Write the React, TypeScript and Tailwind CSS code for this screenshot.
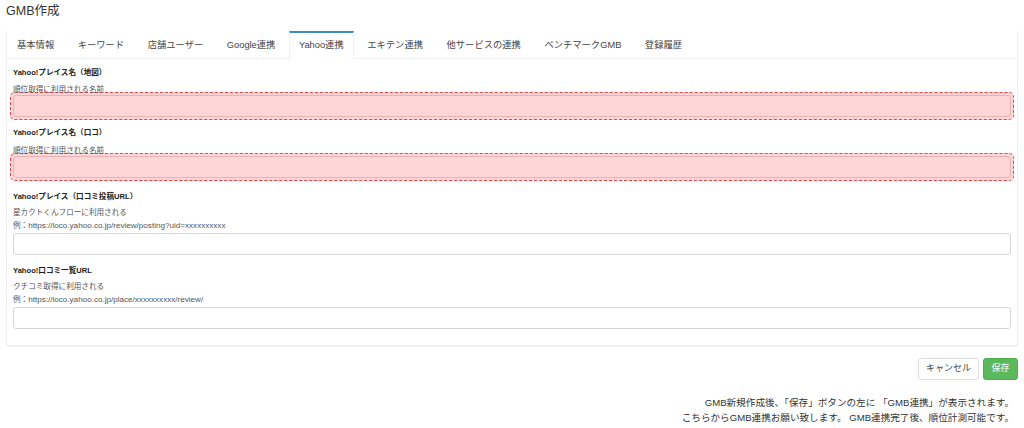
import React from "react";

const FONT = "font-['Liberation_Sans','Noto_Sans_CJK_JP',sans-serif]";

const tabs = [
  "基本情報",
  "キーワード",
  "店舗ユーザー",
  "Google連携",
  "Yahoo連携",
  "エキテン連携",
  "他サービスの連携",
  "ベンチマークGMB",
  "登録履歴",
];

function Label({ children }: { children: React.ReactNode }) {
  return <div className="text-[7.6px] leading-[10px] font-bold text-[#222]">{children}</div>;
}

function Help({ children }: { children: React.ReactNode }) {
  return <div className="text-[7.6px] leading-[13px] text-[#555]">{children}</div>;
}

function ErrorInput() {
  return (
    <div className="-mx-[3px] h-[28px] rounded-[5px] border border-dashed border-[#e8434a] bg-[#ffd6d6] p-[2px]">
      <div className="h-full rounded-[3px] border border-[#e9b3b5] bg-[#ffd6d6]" />
    </div>
  );
}

function Input() {
  return <div className="h-[22px] rounded-[3px] border border-[#d6d6d6] bg-white" />;
}

export default function App() {
  return (
    <div className={`w-[1024px] h-[428px] overflow-hidden bg-white text-[#333] ${FONT}`}>
      <div className="h-[31px] pl-[6px] pt-[3px] text-[12.5px] leading-[16px] text-[#333]">GMB作成</div>

      <div className="mx-[6px] rounded-[3px] border border-t-0 border-[#efefef] bg-white shadow-[0_1px_1px_rgba(0,0,0,0.06)]">
        <div className="flex h-[28px] border-b border-[#f1f1f1]">
          {tabs.map((t) => {
            const active = t === "Yahoo連携";
            return (
              <div
                key={t}
                className={
                  active
                    ? "mr-[3.5px] -mb-[1px] flex h-[29px] items-center border-t-2 border-x border-t-[#3c8dbc] border-x-[#f1f1f1] bg-white px-[9px] pb-[1px] text-[9.3px] text-[#444]"
                    : "mr-[3.5px] flex h-[28px] items-center border-t-2 border-x border-transparent px-[9px] text-[9.3px] text-[#444]"
                }
              >
                {t}
              </div>
            );
          })}
        </div>

        <div className="pl-[6px] pr-[6px] pt-[9px] pb-[16px]">
          <Label>Yahoo!プレイス名（地図）</Label>
          <div className="mt-[4.5px]">
            <Help>順位取得に利用される名前</Help>
          </div>
          <div className="-mt-[3.5px]">
            <ErrorInput />
          </div>

          <div className="mt-[8px]">
            <Label>Yahoo!プレイス名（口コ）</Label>
          </div>
          <div className="mt-[5.5px]">
            <Help>順位取得に利用される名前</Help>
          </div>
          <div className="-mt-[4px]">
            <ErrorInput />
          </div>

          <div className="mt-[11px]">
            <Label>Yahoo!プレイス（口コミ投稿URL）</Label>
          </div>
          <div className="mt-[4.5px]">
            <Help>星カクトくんフローに利用される</Help>
            <Help>
              例：<span className="text-[8.1px]">https://loco.yahoo.co.jp/review/posting?uid=xxxxxxxxxx</span>
            </Help>
          </div>
          <div className="mt-[0.5px]">
            <Input />
          </div>

          <div className="mt-[11px]">
            <Label>Yahoo!口コミ一覧URL</Label>
          </div>
          <div className="mt-[4.5px]">
            <Help>クチコミ取得に利用される</Help>
            <Help>
              例：<span className="text-[8.1px]">https://loco.yahoo.co.jp/place/xxxxxxxxxx/review/</span>
            </Help>
          </div>
          <div className="mt-[0.5px]">
            <Input />
          </div>
        </div>
      </div>

      <div className="mr-[6px] mt-[12px] flex justify-end gap-[4px]">
        <div className="flex h-[22px] w-[61px] items-center justify-center rounded-[3px] border border-[#ddd] bg-white text-[9px] text-[#444]">
          キャンセル
        </div>
        <div className="flex h-[22px] w-[35px] items-center justify-center rounded-[3px] border border-[#4cae4c] bg-[#5cb85c] text-[9px] text-white">
          保存
        </div>
      </div>

      <div className="mr-[10px] mt-[15px] text-right text-[9.6px] leading-[15px] text-[#333]">
        <div>GMB新規作成後、「保存」ボタンの左に 「GMB連携」が表示されます。</div>
        <div>こちらからGMB連携お願い致します。 GMB連携完了後、順位計測可能です。</div>
      </div>
    </div>
  );
}
